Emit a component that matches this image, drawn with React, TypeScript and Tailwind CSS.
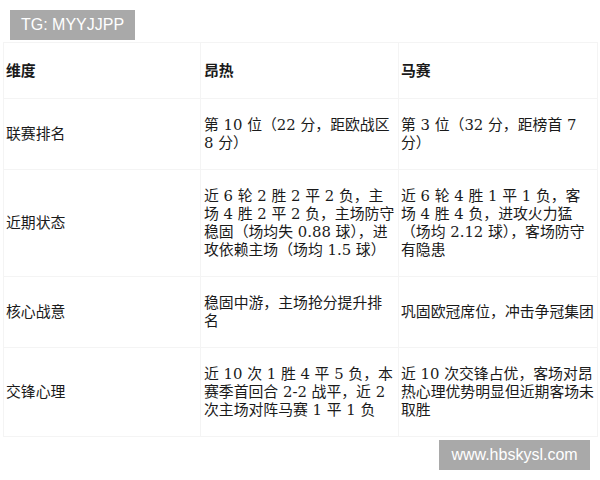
import * as React from "react";

type Row = { dim: string; a: string; b: string };

const rows: Row[] = [
  {
    dim: "联赛排名",
    a: "第 10 位（22 分，距欧战区 8 分）",
    b: "第 3 位（32 分，距榜首 7 分）",
  },
  {
    dim: "近期状态",
    a: "近 6 轮 2 胜 2 平 2 负，主场 4 胜 2 平 2 负，主场防守稳固（场均失 0.88 球），进攻依赖主场（场均 1.5 球）",
    b: "近 6 轮 4 胜 1 平 1 负，客场 4 胜 4 负，进攻火力猛（场均 2.12 球），客场防守有隐患",
  },
  {
    dim: "核心战意",
    a: "稳固中游，主场抢分提升排名",
    b: "巩固欧冠席位，冲击争冠集团",
  },
  {
    dim: "交锋心理",
    a: "近 10 次 1 胜 4 平 5 负，本赛季首回合 2-2 战平，近 2 次主场对阵马赛 1 平 1 负",
    b: "近 10 次交锋占优，客场对昂热心理优势明显但近期客场未取胜",
  },
];

const fonte = "[font-family:'DejaVu_Serif','Noto_Sans_CJK_SC',serif]";

export default function App() {
  return (
    <div className="relative h-[480px] w-[600px] overflow-hidden bg-white text-[#1a1a1a]">
      <div className="pl-[3px] pt-[42px]">
        <table className={`w-[594px] table-fixed border-collapse text-[14.85px] leading-[18px] ${fonte}`}>
          <colgroup>
            <col className="w-[197px]" />
            <col className="w-[198px]" />
            <col className="w-[199px]" />
          </colgroup>
          <thead>
            <tr className="h-[56px]">
              <th className="border border-[#f4f4f4] pl-[2px] pr-[2px] text-left align-middle font-bold">维度</th>
              <th className="border border-[#f4f4f4] pl-[3px] pr-[2px] text-left align-middle font-bold">昂热</th>
              <th className="border border-[#f4f4f4] pl-[2px] pr-[2.5px] text-left align-middle font-bold">马赛</th>
            </tr>
          </thead>
          <tbody>
            {rows.map((r) => (
              <tr key={r.dim}>
                <td className="border border-[#f4f4f4] py-[17px] pl-[2px] pr-[2px] align-middle">{r.dim}</td>
                <td className="border border-[#f4f4f4] py-[17px] pl-[3px] pr-[2px] align-middle">{r.a}</td>
                <td className="border border-[#f4f4f4] py-[17px] pl-[2px] pr-[2.5px] align-middle">{r.b}</td>
              </tr>
            ))}
          </tbody>
        </table>
      </div>

      {/* 水印 */}
      <div className="absolute left-[10px] top-[10px] flex h-[30px] w-[125px] items-center justify-center bg-[#a9a9a9] text-[16px] text-white [font-family:'Liberation_Sans',Arial,sans-serif]">
        TG: MYYJJPP
      </div>
      <div className="absolute left-[439px] top-[440px] flex h-[30px] w-[151px] items-center justify-center bg-[#a9a9a9] text-[16px] text-white [font-family:'Liberation_Sans',Arial,sans-serif]">
        www.hbskysl.com
      </div>
    </div>
  );
}
